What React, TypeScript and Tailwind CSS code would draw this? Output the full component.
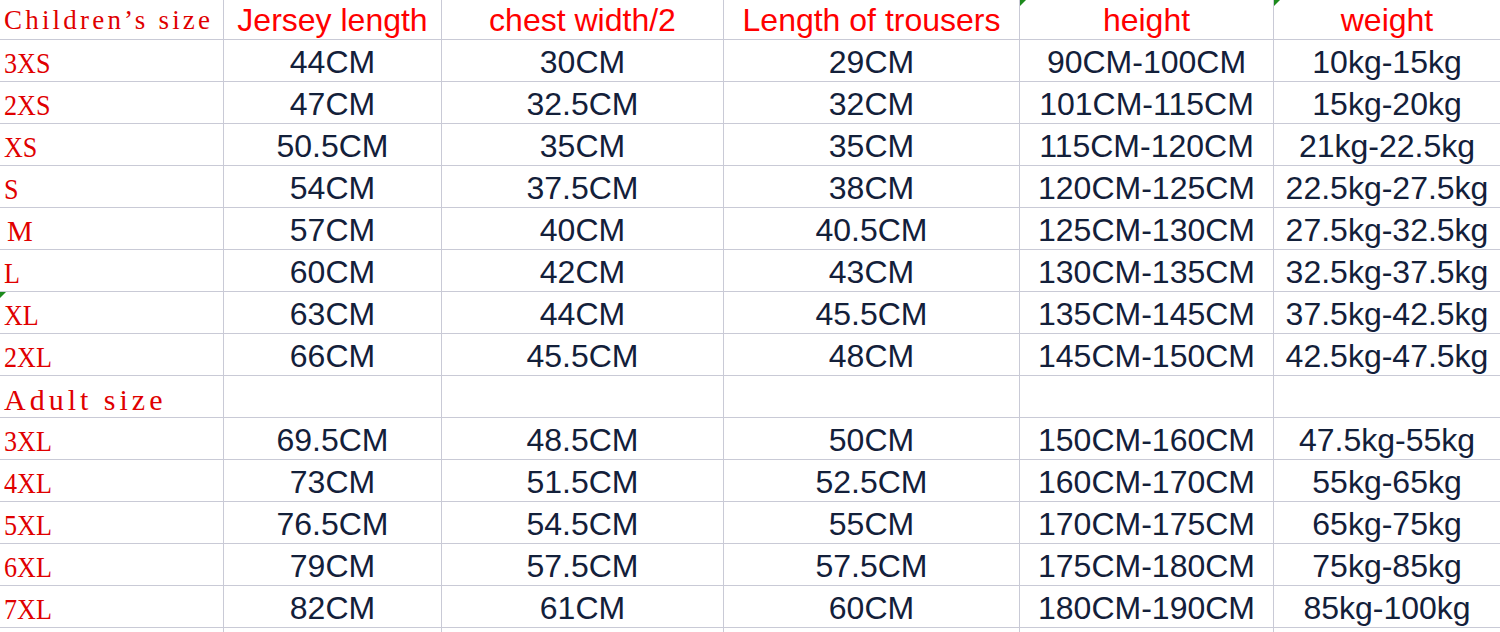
import React from 'react';

const rows: string[][] = [
  ['3XS', '44CM', '30CM', '29CM', '90CM-100CM', '10kg-15kg'],
  ['2XS', '47CM', '32.5CM', '32CM', '101CM-115CM', '15kg-20kg'],
  ['XS', '50.5CM', '35CM', '35CM', '115CM-120CM', '21kg-22.5kg'],
  ['S', '54CM', '37.5CM', '38CM', '120CM-125CM', '22.5kg-27.5kg'],
  ['M', '57CM', '40CM', '40.5CM', '125CM-130CM', '27.5kg-32.5kg'],
  ['L', '60CM', '42CM', '43CM', '130CM-135CM', '32.5kg-37.5kg'],
  ['XL', '63CM', '44CM', '45.5CM', '135CM-145CM', '37.5kg-42.5kg'],
  ['2XL', '66CM', '45.5CM', '48CM', '145CM-150CM', '42.5kg-47.5kg'],
  ['Adult size', '', '', '', '', ''],
  ['3XL', '69.5CM', '48.5CM', '50CM', '150CM-160CM', '47.5kg-55kg'],
  ['4XL', '73CM', '51.5CM', '52.5CM', '160CM-170CM', '55kg-65kg'],
  ['5XL', '76.5CM', '54.5CM', '55CM', '170CM-175CM', '65kg-75kg'],
  ['6XL', '79CM', '57.5CM', '57.5CM', '175CM-180CM', '75kg-85kg'],
  ['7XL', '82CM', '61CM', '60CM', '180CM-190CM', '85kg-100kg'],
];

const headers = ['Jersey length', 'chest width/2', 'Length of trousers', 'height', 'weight'];

const serif = { fontFamily: '"Liberation Serif", "Times New Roman", serif' };
const arial = { fontFamily: '"Liberation Sans", Arial, sans-serif' };

// error marker excel puts in the corner of a cell
const Flag = () => (
  <span className="absolute left-0 top-0 h-0 w-0 border-t-[6px] border-r-[6px] border-t-[#1d8a1d] border-r-transparent" />
);

const cell = 'relative border-r border-b border-[#c9cad6]';

export default function App() {
  return (
    <div className="h-[632px] w-[1500px] overflow-hidden bg-white">
      <div className="grid grid-cols-[224px_218px_282px_296px_254px_226px]">
        <div
          className={`${cell} h-[40px] whitespace-nowrap pl-[4px] text-[27px] leading-[40px] tracking-[3.2px] text-[#e00000]`}
          style={serif}
        >
          Children’s size
        </div>
        {headers.map((h, i) => (
          <div
            key={h}
            className={`${cell} h-[40px] text-center text-[32px] leading-[40px] text-[#ff0000] ${i === 4 ? 'border-r-0' : ''}`}
            style={arial}
          >
            {(i === 3 || i === 4) && <Flag />}
            {h}
          </div>
        ))}

        {rows.map((r) =>
          r.map((v, j) => {
            if (j === 0) {
              const adult = v === 'Adult size';
              return (
                <div
                  key={r[0] + j}
                  className={`${cell} h-[42px] whitespace-nowrap pl-[4px] text-[29px] leading-[47px] text-[#e00000]`}
                  style={serif}
                >
                  {v === 'XL' && <Flag />}
                  {adult ? (
                    <span className="text-[30px] tracking-[4px]">{v}</span>
                  ) : v === 'M' ? (
                    <span className="inline-block pl-[3px]">{v}</span>
                  ) : (
                    <span className="inline-block origin-left scale-x-[0.9]">{v}</span>
                  )}
                </div>
              );
            }
            return (
              <div
                key={r[0] + j}
                className={`${cell} h-[42px] text-center text-[32px] leading-[44px] text-[#13203a] ${j === 5 ? 'border-r-0' : ''}`}
                style={arial}
              >
                {v}
              </div>
            );
          })
        )}

        {[0, 1, 2, 3, 4, 5].map((k) => (
          <div key={'e' + k} className={`${cell} h-[42px] ${k === 5 ? 'border-r-0' : ''}`} />
        ))}
      </div>
    </div>
  );
}
